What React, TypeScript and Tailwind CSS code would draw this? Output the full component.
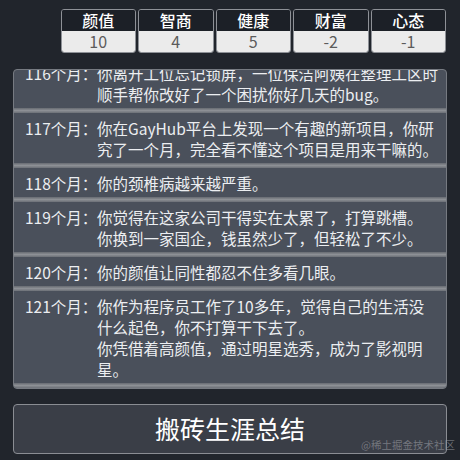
const stats = [
  { label: '颜值', value: 10 },
  { label: '智商', value: 4 },
  { label: '健康', value: 5 },
  { label: '财富', value: -2 },
  { label: '心态', value: -1 },
];

const logs = [
  { month: 116, text: '你离开工位忘记锁屏，一位保洁阿姨在整理工区时顺手帮你改好了一个困扰你好几天的bug。' },
  { month: 117, text: '你在GayHub平台上发现一个有趣的新项目，你研究了一个月，完全看不懂这个项目是用来干嘛的。' },
  { month: 118, text: '你的颈椎病越来越严重。' },
  { month: 119, text: '你觉得在这家公司干得实在太累了，打算跳槽。\n你换到一家国企，钱虽然少了，但轻松了不少。' },
  { month: 120, text: '你的颜值让同性都忍不住多看几眼。' },
  { month: 121, text: '你作为程序员工作了10多年，觉得自己的生活没什么起色，你不打算干下去了。\n你凭借着高颜值，通过明星选秀，成为了影视明星。' },
];

export default function App() {
  return (
    <div
      className="relative h-[460px] w-[460px] overflow-hidden bg-[#21252c] text-white"
      style={{ fontFamily: '"Noto Sans CJK SC", "Noto Sans", sans-serif' }}
    >
      {/* attribute panel */}
      <div className="flex justify-end gap-[2px] pt-[9px] pr-[14px]">
        {stats.map(({ label, value }) => (
          <div key={label} className="w-[75.5px] overflow-hidden rounded-[3px] border border-[#8e9197] text-center">
            <div className="h-[21px] bg-[#1c2027] text-[16px] leading-[21px] font-medium">{label}</div>
            <div className="h-[21px] bg-[#ebebeb] text-[16px] leading-[21px] text-[#5b5b5b]">{value}</div>
          </div>
        ))}
      </div>

      {/* event log, pinned to the latest entry */}
      <div className="mx-[13px] mt-[16px] flex h-[320px] flex-col justify-end overflow-hidden rounded-[4px] border border-[#767a81] bg-[#4a505b]">
        {logs.map(({ month, text }) => (
          <div key={month} className="shrink-0">
            <div className="flex pl-[11px] pr-[7.5px] pt-[5px] pb-[3px] text-[15.5px] leading-[21px] text-[#eceef1]">
              <span className="w-[72px] shrink-0 whitespace-nowrap">{month}个月：</span>
              <span className="flex-1 whitespace-pre-line">{text}</span>
            </div>
            <div className="h-[5px] bg-gradient-to-b from-[#676b72] via-[#8d9095] to-[#6c7077]" />
          </div>
        ))}
      </div>

      <button className="mx-[13px] mt-[15px] h-[50px] w-[434px] rounded-[4px] border border-[#8a8d93] bg-[#3a3e47] text-[25px] text-white">
        搬砖生涯总结
      </button>

      <span className="absolute right-[5px] bottom-[7px] text-[10.5px] text-[#9a9da3]/60">@稀土掘金技术社区</span>
    </div>
  );
}
